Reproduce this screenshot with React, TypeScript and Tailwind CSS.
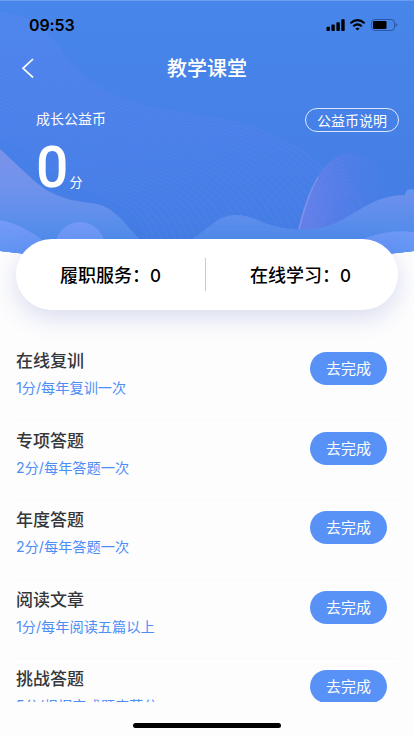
interface Task {
    title: string;
    desc: string;
}

const tasks: Task[] = [
    { title: '在线复训', desc: '1分/每年复训一次' },
    { title: '专项答题', desc: '2分/每年答题一次' },
    { title: '年度答题', desc: '2分/每年答题一次' },
    { title: '阅读文章', desc: '1分/每年阅读五篇以上' },
    { title: '挑战答题', desc: '5分/根据完成题库获分' },
];

// outermost and innermost ripple, everything between is interpolated
const outer = [-5, 12, 62, 17, 55, 66, 105, 90, 150, 115, 204, 112, 250, 126, 310, 145, 350, 185, 372, 250];
const inner = [-5, 130, 15, 140, 40, 165, 80, 185, 100, 195, 115, 200, 130, 210, 140, 220, 148, 235, 150, 250];

function ripple(t: number) {
    const p = outer.map((v, i) => (v + (inner[i] - v) * t).toFixed(1));
    return `M${p[0]} ${p[1]}C${p.slice(2).join(' ')}`;
}

function HeroBackground() {
    const rings = Array.from({ length: 32 }, (_, i) => i);
    return (
        <svg className="absolute inset-x-0 top-0" width="414" height="270" viewBox="0 0 414 270" fill="none">
            <defs>
                <linearGradient id="sky" x1="0" y1="0" x2="0" y2="1">
                    <stop offset="0" stopColor="#4786eb" />
                    <stop offset="0.45" stopColor="#4681e7" />
                    <stop offset="1" stopColor="#437be3" />
                </linearGradient>
                <linearGradient id="sheet" x1="0" y1="0" x2="0" y2="1">
                    <stop offset="0" stopColor="#4f87ed" stopOpacity="0.8" />
                    <stop offset="0.5" stopColor="#4b80ea" stopOpacity="0.7" />
                    <stop offset="1" stopColor="#437fe7" stopOpacity="0.1" />
                </linearGradient>
                <linearGradient id="waveLeft" x1="0" y1="150" x2="0" y2="242" gradientUnits="userSpaceOnUse">
                    <stop offset="0" stopColor="#7b92e9" />
                    <stop offset="0.4" stopColor="#7092eb" />
                    <stop offset="1" stopColor="#4e8ceb" />
                </linearGradient>
                <linearGradient id="waveRight" x1="0" y1="195" x2="0" y2="245" gradientUnits="userSpaceOnUse">
                    <stop offset="0" stopColor="#6b90ec" />
                    <stop offset="1" stopColor="#4c8aeb" />
                </linearGradient>
                <linearGradient id="front" x1="0" y1="220" x2="0" y2="256" gradientUnits="userSpaceOnUse">
                    <stop offset="0" stopColor="#769af7" />
                    <stop offset="1" stopColor="#5e94f4" />
                </linearGradient>
                <linearGradient id="fin" x1="305" y1="185" x2="395" y2="180" gradientUnits="userSpaceOnUse">
                    <stop offset="0" stopColor="#727fe9" stopOpacity="0.6" />
                    <stop offset="0.4" stopColor="#5f7ce8" stopOpacity="0.5" />
                    <stop offset="1" stopColor="#4c7ee7" stopOpacity="0" />
                </linearGradient>
                <clipPath id="edge">
                    <path d="M0 0H414V251Q207 276 0 251Z" />
                </clipPath>
            </defs>
            <g clipPath="url(#edge)">
                <rect width="414" height="270" fill="url(#sky)" />
                <path d="M0 12C62 17 55 66 105 90C150 115 204 112 250 126C310 145 350 185 372 240H0Z" fill="url(#sheet)" />
                {/* ripples */}
                {rings.map((i) => (
                    <path key={i} d={ripple(i / 31)} stroke="#6489f2" strokeOpacity="0.2" strokeWidth="2" />
                ))}
                <path d="M298 230C306 192 324 153 350 153C374 153 380 180 414 188V240H298Z" fill="url(#fin)" />
                {rings.slice(0, 16).map((i) => (
                    <path
                        key={i}
                        d={`M${299 + i * 1.5} 230C${306 + i * 2} ${200 - i / 2} ${318 + i * 2} ${168 + i} ${340 + i * 2} ${157 + i * 4}`}
                        stroke="#8d93ef"
                        strokeOpacity={0.22 - i * 0.008}
                        strokeWidth="0.8"
                    />
                ))}
                <path d="M299 230C304 207 309 193 318 177" stroke="#a5b0f0" strokeOpacity="0.45" strokeWidth="1.3" />
                <path d="M0 149C29 175 40 190 62 197C83 205 98 200 112 211C125 221 132 232 145 245V270H0Z" fill="url(#waveLeft)" />
                <circle cx="411" cy="195" r="6" fill="#6594f0" />
                <path
                    d="M184 244C207 232 215 215 236 215C258 215 266 231 310 229C350 227 363 195 405 195L414 195V270H184Z"
                    fill="url(#waveRight)"
                />
                <path d="M0 220C20 224 34 234 50 245V265H0Z" fill="url(#front)" />
                <circle cx="80" cy="247" r="25" fill="url(#front)" />
                <path d="M350 245C370 235 390 229 414 232V265H350Z" fill="url(#front)" />
            </g>
            <path d="M0 .5H414" stroke="#6c9cf0" />
        </svg>
    );
}

function StatusBar() {
    return (
        <div className="flex h-[44px] items-center justify-between pt-[6px] pr-[16px] pl-[29px] text-black">
            <span className="font-[Inter] text-[16px] font-semibold tracking-[-0.1px]">09:53</span>
            <svg width="72" height="14" viewBox="0 0 72 14">
                <rect x="0.5" y="8.7" width="3.4" height="4.3" rx="0.8" />
                <rect x="5.4" y="6.6" width="3.4" height="6.4" rx="0.8" />
                <rect x="10.4" y="4.2" width="3.4" height="8.8" rx="0.8" />
                <rect x="15.3" y="1.3" width="3.4" height="11.7" rx="0.8" />
                <g fill="none" stroke="#000" strokeWidth="2">
                    <path d="M24.4 5.2Q31.5 -1 38.6 5.2" />
                    <path d="M27.2 8.2Q31.5 4.6 35.8 8.2" />
                </g>
                <path d="M29.4 10.4Q31.5 8.9 33.6 10.4L31.5 12.6Z" />
                <rect x="45.5" y="1.5" width="23" height="11" rx="3.2" fill="none" stroke="#2b569f" strokeWidth="1" />
                <rect x="47" y="3" width="13.5" height="8" rx="1.3" />
                <path d="M69.6 5.2Q71.3 5.7 71.3 7T69.6 8.8Z" fill="#2b569f" />
            </svg>
        </div>
    );
}

function TaskRow({ title, desc }: Task) {
    return (
        <li className="flex h-[79.5px] shrink-0 items-start justify-between border-b border-[#f9f9fa] pr-[11px]">
            <div className="pt-[6px]">
                <h3 className="text-[17px] leading-[26px] font-medium text-[#34363a]">{title}</h3>
                <p className="mt-[4px] font-[Inter,'Noto_Sans_CJK_SC',sans-serif] text-[14.2px] leading-[22px] whitespace-nowrap text-[#4c8df6]">
                    {desc}
                </p>
            </div>
            <button className="mt-[11px] h-[33px] w-[77px] rounded-full bg-[#5892f7] pb-px text-[15px] leading-[32px] text-white">
                去完成
            </button>
        </li>
    );
}

export default function App() {
    return (
        <div className="flex h-[736px] w-[414px] flex-col overflow-hidden bg-[#fdfdfe] font-['Noto_Sans_CJK_SC',sans-serif]">
            <div className="relative h-[341px] shrink-0">
                <HeroBackground />
                <div className="relative">
                    <StatusBar />
                    <header className="grid h-[48px] grid-cols-[1fr_auto_1fr] items-center text-white">
                        <svg className="ml-[21px]" width="14" height="20" viewBox="0 0 14 20" fill="none">
                            <path d="M12 1L2 10.3L12 19.5" stroke="#fff" strokeWidth="1.7" />
                        </svg>
                        <h1 className="text-[20px] leading-[30px] font-medium">教学课堂</h1>
                    </header>
                    <div className="flex h-[147px] items-start justify-between pr-[15px] pl-[36px] text-white">
                        <div>
                            <p className="mt-[16px] text-[14px] leading-[20px]">成长公益币</p>
                            <div className="flex items-baseline gap-px">
                                <span className="font-[Roboto] text-[57px] leading-[80px] font-medium">0</span>
                                <span className="text-[13px]">分</span>
                            </div>
                        </div>
                        <button className="mt-[16px] h-[24px] w-[94px] rounded-full border border-[#dce8ff] text-[14px] leading-[22px]">
                            公益币说明
                        </button>
                    </div>
                    <section className="mx-[16px] flex h-[71px] items-center rounded-full bg-white text-[18px] font-medium text-black shadow-[0_8px_24px_rgba(73,88,170,0.2)]">
                        <div className="w-[189px] pt-px text-center">
                            履职服务：<span className="font-[Inter] text-[17px]">0</span>
                        </div>
                        <div className="h-[33px] w-px bg-[#b5ccf8]" />
                        <div className="w-[189px] pt-px text-center">
                            在线学习：<span className="font-[Inter] text-[17px]">0</span>
                        </div>
                    </section>
                </div>
            </div>
            <ul className="flex h-[361px] shrink-0 flex-col overflow-hidden px-[16px]">
                {tasks.map((task) => (
                    <TaskRow key={task.title} {...task} />
                ))}
            </ul>
            <div className="flex flex-1 items-start justify-center pt-[21px]">
                <div className="h-[5px] w-[148px] rounded-full bg-black" />
            </div>
        </div>
    );
}
